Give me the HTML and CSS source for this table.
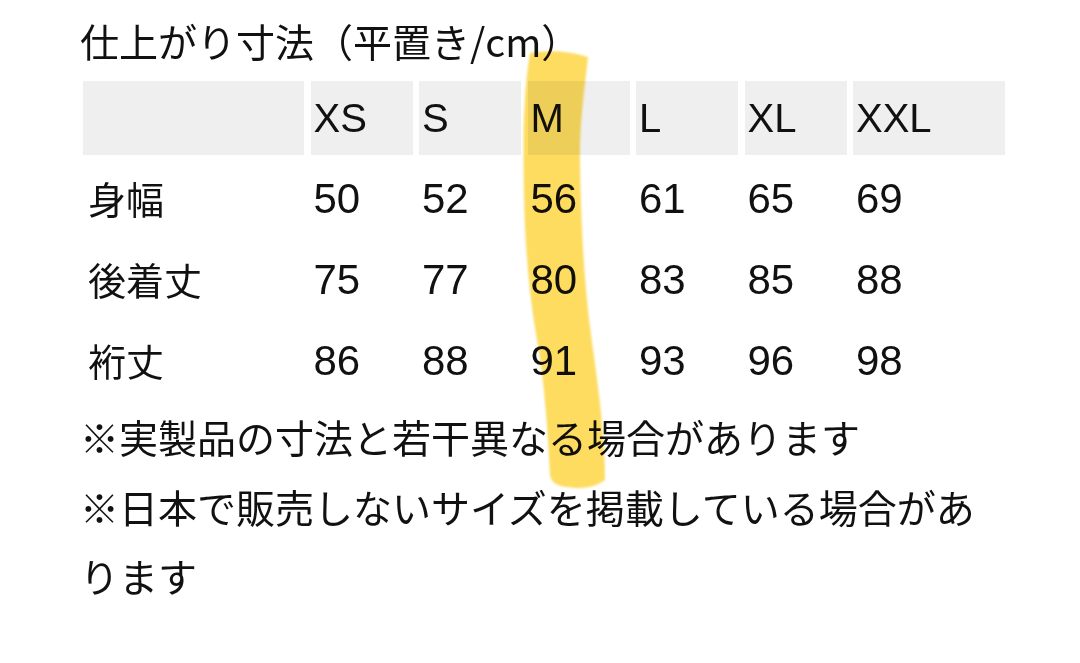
FILE: index.html
```html
<!DOCTYPE html>
<html lang="ja">
<head>
<meta charset="utf-8">
<title>仕上がり寸法</title>
<link rel="stylesheet" href="styles.css">
</head>
<body>
<div class="page">
  <h1 class="title">仕上がり寸法（平置き/cm）</h1>
  <div class="size-table">
    <div class="cell head"></div>
    <div class="cell head">XS</div>
    <div class="cell head">S</div>
    <div class="cell head">M</div>
    <div class="cell head">L</div>
    <div class="cell head">XL</div>
    <div class="cell head">XXL</div>

    <div class="cell label">身幅</div>
    <div class="cell num">50</div>
    <div class="cell num">52</div>
    <div class="cell num">56</div>
    <div class="cell num">61</div>
    <div class="cell num">65</div>
    <div class="cell num">69</div>

    <div class="cell label">後着丈</div>
    <div class="cell num">75</div>
    <div class="cell num">77</div>
    <div class="cell num">80</div>
    <div class="cell num">83</div>
    <div class="cell num">85</div>
    <div class="cell num">88</div>

    <div class="cell label">裄丈</div>
    <div class="cell num">86</div>
    <div class="cell num">88</div>
    <div class="cell num">91</div>
    <div class="cell num">93</div>
    <div class="cell num">96</div>
    <div class="cell num">98</div>
  </div>
  <div class="notes">
    <p class="note">※実製品の寸法と若干異なる場合があります</p>
    <p class="note">※日本で販売しないサイズを掲載している場合があります</p>
  </div>
</div>
<svg class="marker" width="100" height="450" viewBox="0 0 100 450" aria-hidden="true">
  <defs>
    <filter id="soft" x="-20%" y="-5%" width="140%" height="110%">
      <feGaussianBlur stdDeviation="1.2"/>
    </filter>
  </defs>
  <path filter="url(#soft)" fill="#fddc5f" d="M15,8 Q45,3 73,12 C70,40 64,80 65,120 C66,170 68,230 76,290 C83,340 90,390 90,435 Q75,446 52,442 Q36,440 35,430 C33,390 30,340 22,295 C14,250 10,200 9,150 C8,100 8,50 15,8 Z"/>
</svg>
</body>
</html>
```

FILE: styles.css
```css
html, body {
  margin: 0;
  padding: 0;
  background: #ffffff;
}

body {
  position: relative;
  width: 1080px;
  height: 663px;
  overflow: hidden;
  color: #111111;
  font-family: "Liberation Sans", "Noto Sans CJK JP", sans-serif;
}

.page {
  margin-left: 80px;
  width: 925px;
  padding-top: 15px;
}

.title {
  margin: 0;
  font-family: "Noto Sans CJK JP", sans-serif;
  font-weight: 400;
  font-size: 39px;
  line-height: 50px;
  height: 50px;
}

.size-table {
  margin: 16px 0 0 3px;
  display: grid;
  grid-template-columns: 221px repeat(5, 102px) 152px;
  grid-auto-rows: 74px;
  column-gap: 6.5px;
  row-gap: 7px;
}

.cell {
  display: flex;
  align-items: center;
  padding-left: 3px;
  font-size: 42px;
}

.head {
  background: #efefef;
  font-size: 40px;
}

.label {
  padding-left: 5px;
  padding-bottom: 4px;
  font-family: "Noto Sans CJK JP", sans-serif;
  font-size: 38px;
}

.notes {
  margin-top: 4px;
}

.note {
  margin: 0;
  font-family: "Noto Sans CJK JP", sans-serif;
  font-size: 39px;
  line-height: 69.5px;
}

.marker {
  position: absolute;
  left: 515px;
  top: 45px;
  mix-blend-mode: multiply;
  pointer-events: none;
}
```
